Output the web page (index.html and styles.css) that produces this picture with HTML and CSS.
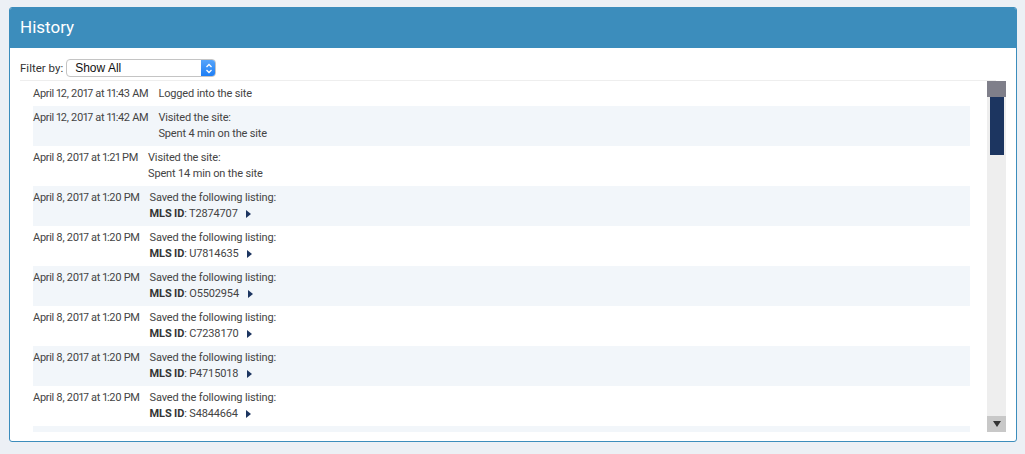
FILE: index.html
```html
<!DOCTYPE html>
<html lang="en">
<head>
<meta charset="utf-8">
<title>History</title>
<link rel="stylesheet" href="styles.css">
</head>
<body>
<div class="panel">
  <div class="panel-head">History</div>
  <div class="panel-body">
    <div class="filter">
      <label class="filter-label">Filter by:</label>
      <div class="select">
        <span class="select-text">Show All</span>
        <span class="select-cap">
          <svg width="8" height="11" viewBox="0 0 8 11"><path d="M1.5 4 L4 1.5 L6.5 4 M1.5 7 L4 9.5 L6.5 7" fill="none" stroke="#fff" stroke-width="1.3"/></svg>
        </span>
      </div>
    </div>
    <div class="divider"></div>
    <div class="scroller">
      <div class="list">
        <div class="row"><span class="date">April 12, 2017 at 11:43 AM</span><span class="desc">Logged into the site</span></div>
        <div class="row alt"><span class="date">April 12, 2017 at 11:42 AM</span><span class="desc">Visited the site:<br>Spent 4 min on the site</span></div>
        <div class="row"><span class="date">April 8, 2017 at 1:21 PM</span><span class="desc">Visited the site:<br>Spent 14 min on the site</span></div>
        <div class="row alt"><span class="date">April 8, 2017 at 1:20 PM</span><span class="desc">Saved the following listing:<br><b>MLS ID</b>: T2874707 <span class="tri"></span></span></div>
        <div class="row"><span class="date">April 8, 2017 at 1:20 PM</span><span class="desc">Saved the following listing:<br><b>MLS ID</b>: U7814635 <span class="tri"></span></span></div>
        <div class="row alt"><span class="date">April 8, 2017 at 1:20 PM</span><span class="desc">Saved the following listing:<br><b>MLS ID</b>: O5502954 <span class="tri"></span></span></div>
        <div class="row"><span class="date">April 8, 2017 at 1:20 PM</span><span class="desc">Saved the following listing:<br><b>MLS ID</b>: C7238170 <span class="tri"></span></span></div>
        <div class="row alt"><span class="date">April 8, 2017 at 1:20 PM</span><span class="desc">Saved the following listing:<br><b>MLS ID</b>: P4715018 <span class="tri"></span></span></div>
        <div class="row"><span class="date">April 8, 2017 at 1:20 PM</span><span class="desc">Saved the following listing:<br><b>MLS ID</b>: S4844664 <span class="tri"></span></span></div>
        <div class="row alt row-empty"></div>
      </div>
      <div class="scrollbar">
        <div class="sb-up"></div>
        <div class="sb-track"><div class="sb-thumb"></div></div>
        <div class="sb-down"><span class="sb-arrow"></span></div>
      </div>
    </div>
  </div>
</div>
</body>
</html>
```
FILE: styles.css
```css
html, body {
  margin: 0;
  padding: 0;
  background: #ecf0f5;
}
body {
  padding: 7px 8px 0 9px;
  font-family: Roboto, "Liberation Sans", sans-serif;
  color: #444;
}
.panel {
  width: 1008px;
  height: 435px;
  border: 1px solid #3c8dbc;
  border-radius: 3px;
  background: #fff;
  box-sizing: border-box;
  display: flex;
  flex-direction: column;
  overflow: hidden;
}
.panel-head {
  background: #3c8dbc;
  color: #fff;
  height: 40px;
  flex: none;
  box-sizing: border-box;
  padding: 8px 0 0 10px;
  font-size: 17px;
  line-height: 22px;
}
.panel-body {
  flex: 1;
  padding: 11px 10px 9px 10px;
  display: flex;
  flex-direction: column;
  min-height: 0;
}
.filter {
  display: flex;
  align-items: center;
  gap: 3px;
  height: 18px;
  margin-bottom: 3px;
  flex: none;
}
.filter-label {
  font-size: 11.5px;
  color: #333;
}
.select {
  width: 150px;
  height: 18px;
  box-sizing: border-box;
  border: 1px solid #c4c4c4;
  border-radius: 4px;
  display: flex;
  align-items: center;
  justify-content: space-between;
  background: #fff;
  overflow: hidden;
}
.select-text {
  font-family: "Liberation Sans", Arial, sans-serif;
  font-size: 12px;
  color: #111;
  padding-left: 8px;
}
.select-cap {
  width: 15px;
  height: 18px;
  margin-right: -1px;
  background: linear-gradient(#5aa7fb, #1a7cf5);
  border-radius: 0 4px 4px 0;
  display: flex;
  align-items: center;
  justify-content: center;
}
.divider {
  height: 1px;
  background: #eee;
  width: 976px;
  flex: none;
}
.scroller {
  flex: 1;
  min-height: 0;
  display: flex;
  gap: 17px;
}
.list {
  flex: 1;
  padding-left: 13px;
  overflow: hidden;
}
.row {
  display: flex;
  gap: 10px;
  padding: 4px 0;
  font-size: 11px;
  letter-spacing: -0.15px;
  line-height: 16px;
}
.row:first-child {
  padding-top: 5px;
}
.row.alt {
  background: #f2f6fa;
}
.row-empty {
  height: 32px;
}
.date {
  letter-spacing: -0.3px;
  font-variant-numeric: proportional-nums;
}
.date, .desc {
  white-space: nowrap;
}
.desc b {
  font-weight: 700;
  color: #333;
}
.tri {
  display: inline-block;
  width: 0;
  height: 0;
  border-top: 4px solid transparent;
  border-bottom: 4px solid transparent;
  border-left: 5px solid #1c3560;
  margin-left: 6px;
  vertical-align: -1px;
}
.scrollbar {
  width: 19px;
  flex: none;
  display: flex;
  flex-direction: column;
  background: #eee;
}
.sb-up {
  height: 16px;
  background: #7f7f8a;
  flex: none;
}
.sb-track {
  flex: 1;
  padding: 0 2px 0 3px;
}
.sb-thumb {
  height: 58px;
  background: #1c3560;
}
.sb-down {
  height: 16px;
  background: #c8c8c8;
  flex: none;
  display: flex;
  align-items: center;
  justify-content: center;
}
.sb-arrow {
  width: 0;
  height: 0;
  border-left: 4px solid transparent;
  border-right: 4px solid transparent;
  border-top: 6px solid #333;
}
```
